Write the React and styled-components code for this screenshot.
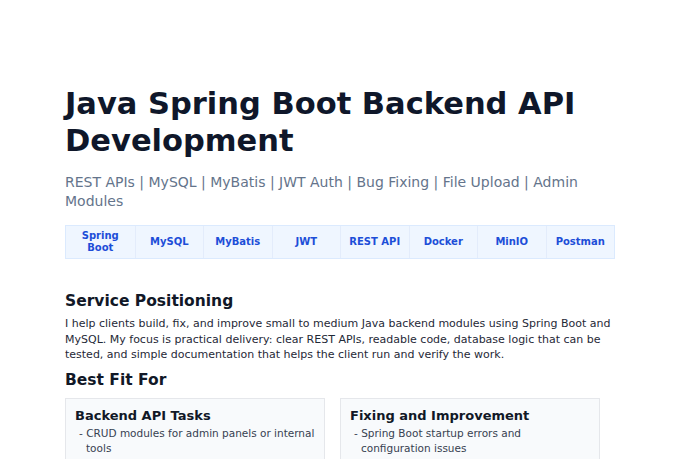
import styled, { createGlobalStyle } from 'styled-components'

const Global = createGlobalStyle`
  body { margin: 0; background: #fff; font-family: "DejaVu Sans", sans-serif; color: #111827; }
`

const tags = ['Spring Boot', 'MySQL', 'MyBatis', 'JWT', 'REST API', 'Docker', 'MinIO', 'Postman']

export default function App() {
  return (
    <Page>
      <Global />
      <Title>Java Spring Boot Backend API Development</Title>
      <Subtitle>REST APIs | MySQL | MyBatis | JWT Auth | Bug Fixing | File Upload | Admin Modules</Subtitle>
      <Tags>
        {tags.map(t => <Tag key={t}>{t}</Tag>)}
      </Tags>
      <Heading>Service Positioning</Heading>
      <Para>
        I help clients build, fix, and improve small to medium Java backend modules using Spring Boot and
        MySQL. My focus is practical delivery: clear REST APIs, readable code, database logic that can be
        tested, and simple documentation that helps the client run and verify the work.
      </Para>
      <Heading $tight>Best Fit For</Heading>
      <Cards>
        <Card>
          <CardTitle>Backend API Tasks</CardTitle>
          <Item>CRUD modules for admin panels or internal tools</Item>
        </Card>
        <Card>
          <CardTitle>Fixing and Improvement</CardTitle>
          <Item>Spring Boot startup errors and configuration issues</Item>
        </Card>
      </Cards>
    </Page>
  )
}

const Page = styled.div`
  width: 550px;
  margin: 0 auto;
  padding: 85px 0 0 0;
`

const Title = styled.h1`
  margin: 0;
  font-size: 30.5px;
  line-height: 37px;
  font-weight: 700;
  color: #0f172a;
`

const Subtitle = styled.p`
  margin: 14px 0 0;
  font-size: 14px;
  line-height: 19px;
  color: #64748b;
`

const Tags = styled.div`
  margin-top: 14px;
  display: grid;
  grid-template-columns: repeat(8, 1fr);
  border: 1px solid #dbeafe;
  background: #eff6ff;
`

const Tag = styled.div`
  height: 32px;
  display: flex;
  align-items: center;
  justify-content: center;
  text-align: center;
  padding: 0 4px;
  border-left: 1px solid #e3ecfb;
  font-size: 10px;
  line-height: 12px;
  font-weight: 700;
  color: #1d4ed8;
  &:first-child { border-left: none; }
`

const Heading = styled.h2`
  margin: ${p => (p.$tight ? '7px' : '32px')} 0 5px;
  font-size: 15.5px;
  line-height: 20px;
  font-weight: 700;
`

const Para = styled.p`
  margin: 0;
  font-size: 11px;
  line-height: 15.5px;
  color: #1f2937;
`

const Cards = styled.div`
  margin-top: 8px;
  display: grid;
  grid-template-columns: 260px 260px;
  gap: 15px;
`

const Card = styled.div`
  background: #f8fafc;
  border: 1px solid #e5e7eb;
  padding: 8px 9px;
`

const CardTitle = styled.h3`
  margin: 0 0 2px;
  font-size: 13px;
  line-height: 17px;
  font-weight: 700;
`

const Item = styled.div`
  font-size: 10.5px;
  line-height: 15px;
  color: #374151;
  padding-left: 11px;
  text-indent: -7px;
  &::before { content: '- '; }
`
